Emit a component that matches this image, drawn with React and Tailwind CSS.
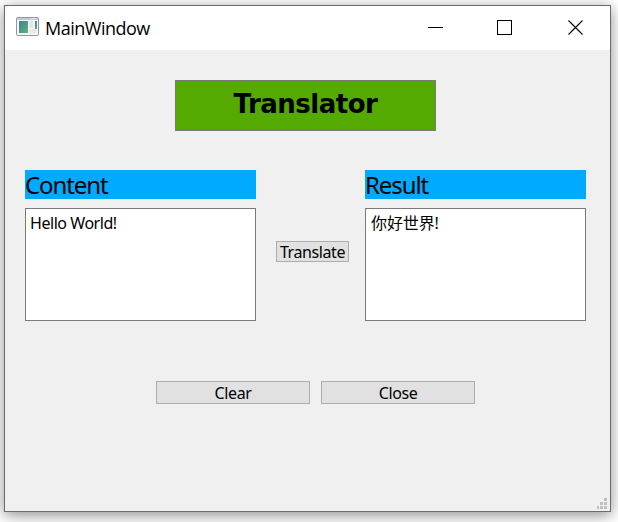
const sans = "font-['Noto_Sans','Noto_Sans_CJK_SC',sans-serif]";

function AppIcon() {
  return (
    <svg width="23" height="19" viewBox="0 0 23 19" className="shrink-0">
      <defs>
        <linearGradient id="pane" x1="0" y1="0" x2="1" y2="1">
          <stop offset="0" stopColor="#3f7fa0" />
          <stop offset="1" stopColor="#62b56c" />
        </linearGradient>
      </defs>
      <rect x="0.5" y="0.5" width="22" height="18" rx="1" fill="#f5f5f5" stroke="#8f969e" />
      <rect x="1" y="1" width="21" height="2" fill="#c3cad2" />
      <rect x="15" y="1" width="5" height="1" fill="#e9edf1" />
      <rect x="3" y="4" width="9" height="12" fill="url(#pane)" />
      <rect x="13.5" y="4" width="4" height="7" fill="#e6e6e6" />
      <rect x="13.5" y="12" width="7" height="4" fill="#e9e9e9" />
      <rect x="19" y="4" width="2" height="8" fill="url(#pane)" />
    </svg>
  );
}

function TitleBar() {
  return (
    <header className="flex h-[44px] items-start bg-white pl-[11px]">
      <div className="pt-[11px]"><AppIcon /></div>
      <h1 className="ml-[6px] w-[120px] whitespace-nowrap pt-[10px] font-['Open_Sans',sans-serif] text-[18px] leading-[24px] tracking-[-0.5px] text-black">MainWindow</h1>
      <div className="ml-auto flex pr-[26px] pt-[14px]">
        <svg width="16" height="16" shapeRendering="crispEdges"><path d="M0 7.5h15" stroke="#000" /></svg>
        <svg width="16" height="16" shapeRendering="crispEdges" className="ml-[53px] mr-[55px]"><path d="M.5 .5h14v14h-14z" fill="none" stroke="#000" /></svg>
        <svg width="16" height="16"><path d="M.5 .5l14 14M14.5 .5l-14 14" fill="none" stroke="#000" strokeWidth="1.1" /></svg>
      </div>
    </header>
  );
}

function Panel({ title, width, textClass, children }) {
  return (
    <section className={width}>
      <h3 className={`${sans} h-[29px] whitespace-nowrap bg-[#00aaff] text-[24px] leading-[29px] tracking-[-1.1px] text-black`}>{title}</h3>
      <div className={`${sans} mt-[9px] h-[113px] border border-[#7a7a7a] bg-white pt-[4px] text-[16px] leading-[21px] text-black ${textClass}`}>{children}</div>
    </section>
  );
}

function Button({ className, children }) {
  return (
    <button className={`${sans} flex items-center justify-center whitespace-nowrap border border-[#adadad] bg-[#e1e1e1] pt-[2px] text-[16px] leading-[21px] tracking-[-0.4px] text-black ${className}`}>{children}</button>
  );
}

function SizeGrip() {
  return (
    <svg width="11" height="12" shapeRendering="crispEdges" fill="#bfbfbf">
      <path d="M7 0h3v3h-3zM3 4h3v3h-3zM7 4h3v3h-3zM0 8h2v3h-2zM3 8h3v3h-3zM7 8h3v3h-3z" />
    </svg>
  );
}

export default function App() {
  return (
    <div className="h-[522px] w-[618px] overflow-hidden bg-white pl-[4px] pt-[5px]">
      <div className="flex h-[507px] w-[607px] flex-col border border-[#6b6b6b] bg-[#f0f0f0] shadow-[0_3px_14px_rgba(0,0,0,0.45)]">
        <TitleBar />
        <main className="flex flex-1 flex-col pl-[20px] pt-[30px]">
          <h2 className="ml-[150px] h-[51px] w-[261px] border border-[#7a7a7a] bg-[#55aa00] text-center font-['DejaVu_Sans',sans-serif] text-[26px] font-bold leading-[46px] tracking-[-0.5px] text-black">Translator</h2>
          <div className="mt-[39px] flex">
            <Panel title="Content" width="w-[231px]" textClass="pl-[4px] tracking-[-0.45px]">Hello World!</Panel>
            <Button className="ml-[20px] mr-[16px] mt-[71px] h-[21px] w-[73px]">Translate</Button>
            <Panel title="Result" width="w-[221px]" textClass="pl-[5px] tracking-[-0.1px]">你好世界!</Panel>
          </div>
          <div className="ml-[131px] mt-[60px] flex gap-[11px]">
            <Button className="h-[23px] w-[154px]">Clear</Button>
            <Button className="h-[23px] w-[154px]">Close</Button>
          </div>
          <footer className="mt-auto flex justify-end pb-px pr-[2px]"><SizeGrip /></footer>
        </main>
      </div>
    </div>
  );
}
